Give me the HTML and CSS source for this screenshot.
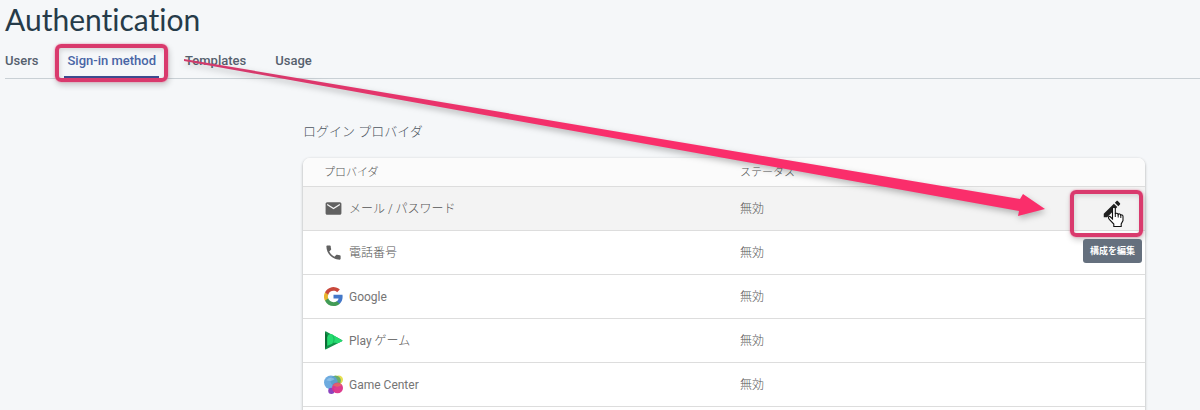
FILE: index.html
```html
<!DOCTYPE html>
<html lang="ja">
<head>
<meta charset="utf-8">
<meta name="viewport" content="width=device-width, initial-scale=1">
<title>Authentication</title>
<link rel="stylesheet" href="styles.css">
</head>
<body>
<div class="page">
  <header class="header">
    <h1 class="title">Authentication</h1>
    <nav class="tabs">
      <a class="tab" href="#users">Users</a>
      <a class="tab tab-active" href="#sign-in" aria-current="page">Sign-in method<span class="marker marker-tab"></span></a>
      <a class="tab" href="#templates">Templates</a>
      <a class="tab" href="#usage">Usage</a>
    </nav>
  </header>
  <main class="content">
    <h2 class="section-title" id="providers">ログイン プロバイダ</h2>
    <div class="card">
      <table class="providers" aria-labelledby="providers">
        <thead>
          <tr><th class="col-name" scope="col">プロバイダ</th><th scope="col">ステータス</th><th class="col-action"></th></tr>
        </thead>
        <tbody>
          <tr class="row-hover">
            <td><div class="provider"><svg class="icon" viewBox="0 0 24 24" fill="#616161"><path d="M20 4H4c-1.100 0-1.990.9-1.990 2L2 18c0 1.100.9 2 2 2h16c1.100 0 2-.9 2-2V6c0-1.100-.9-2-2-2zm0 4l-8 5-8-5V6l8 5 8-5v2z"/></svg><span>メール / パスワード</span></div></td>
            <td>無効</td>
            <td class="action">
              <button class="edit" type="button" aria-label="構成を編集">
                <svg class="pencil" viewBox="0 0 24 24" fill="#202020"><path d="M3 17.250V21h3.750L17.810 9.940l-3.750-3.750L3 17.250zM20.710 7.040c.39-.39.39-1.020 0-1.410l-2.340-2.340c-.39-.39-1.020-.39-1.410 0l-1.830 1.830 3.750 3.750 1.830-1.830z"/></svg>
                <svg class="pointer" viewBox="0 0 17 22"><path d="M5.500 13V2.500C5.500.8 8.300.8 8.300 2.500V8c.3-1 2.700-1 2.900.4.500-.9 2.400-.6 2.600.7.600-.6 2.200-.2 2.200 1.300v4.200l-1.800 3.400v2.500H6.800V18L2.300 13.300C.8 11.700 1.500 9.900 3 10.500L5.500 13z" fill="#fff" stroke="#111" stroke-width="1.100"/><path d="M8.300 7.500v3.500M11.200 8v3.500M13.800 9v3" stroke="#111" fill="none"/></svg>
              </button>
              <span class="marker marker-edit"></span>
              <span class="tooltip" role="tooltip">構成を編集</span>
            </td>
          </tr>
          <tr>
            <td><div class="provider"><svg class="icon" viewBox="0 0 24 24" fill="#616161"><path d="M6.620 10.790c1.440 2.830 3.760 5.140 6.590 6.590l2.200-2.200c.27-.27.67-.36 1.020-.24 1.120.37 2.330.57 3.570.57.55 0 1 .45 1 1V20c0 .55-.45 1-1 1-9.390 0-17-7.610-17-17 0-.55.45-1 1-1h3.500c.55 0 1 .45 1 1 0 1.250.2 2.450.57 3.570.11.35.03.74-.25 1.020l-2.200 2.200z"/></svg><span>電話番号</span></div></td>
            <td>無効</td><td></td>
          </tr>
          <tr>
            <td><div class="provider"><svg class="icon" viewBox="0 0 18 18"><path fill="#4478c8" d="M17.640 9.200c0-.64-.06-1.250-.16-1.840H9v3.480h4.840a4.140 4.140 0 0 1-1.800 2.720v2.260h2.920c1.700-1.570 2.680-3.880 2.680-6.620z"/><path fill="#429b56" d="M9 18c2.430 0 4.470-.8 5.960-2.180l-2.920-2.260c-.8.54-1.840.86-3.040.86-2.340 0-4.330-1.580-5.040-3.710H.96v2.330A9 9 0 0 0 9 18z"/><path fill="#e8b52d" d="M3.960 10.710a5.400 5.400 0 0 1 0-3.420V4.960H.96a9 9 0 0 0 0 8.080l3-2.330z"/><path fill="#c9483c" d="M9 3.580c1.320 0 2.510.45 3.440 1.350l2.580-2.590A9 9 0 0 0 .96 4.960l3 2.330C4.670 5.160 6.660 3.580 9 3.580z"/></svg><span class="latin">Google</span></div></td>
            <td>無効</td><td></td>
          </tr>
          <tr>
            <td><div class="provider"><svg class="icon" viewBox="0 0 18 18"><path d="M1 1v16c0 .5.500.7 1 .4L17 9.700c.7-.4.7-.8 0-1.200L2 .4C1.500.1 1 .4 1 1z" fill="#12934a"/><path d="M1 1l2.500 4v8L1 17z" fill="#0d6b35"/><path d="M3 6c1-3 4-4 6-2l8 4.700c.4.300.3.700 0 .9L13 11.500c-3 0-4-1-5 .5L3 14z" fill="#25dc70"/><path d="M8 4.500c2 1 2 5 0 7.500" fill="none" stroke="#12a851" stroke-width=".7"/></svg><span><span class="latin">Play</span> ゲーム</span></div></td>
            <td>無効</td><td></td>
          </tr>
          <tr>
            <td><div class="provider"><svg class="icon" viewBox="0 0 18 18"><circle cx="14" cy="4.500" r="4" fill="#e6df4f"/><circle cx="11" cy="5.500" r="5" fill="#6cae64"/><circle cx="6.500" cy="7" r="6.500" fill="#5a9fdb" fill-opacity=".88"/><circle cx="7" cy="15" r="3" fill="#8b44be"/><circle cx="12.800" cy="12.200" r="5.200" fill="#dc3288" fill-opacity=".95"/><path d="M8.500 10c2-3 6-3 8.500-.5-3 2-6 2-8.500.5z" fill="#e78052" fill-opacity=".6"/><path d="M2 5c3-3 6-3 8-1-3 2-5 2-8 1z" fill="#a9d6f2" fill-opacity=".5"/></svg><span class="latin">Game Center</span></div></td>
            <td>無効</td><td></td>
          </tr>
          <tr><td></td><td></td><td></td></tr>
        </tbody>
      </table>
    </div>
  </main>
  <svg class="arrow" viewBox="0 0 1200 410" aria-hidden="true">
    <defs><linearGradient id="stroke-tone"><stop offset="0" stop-color="#cf3b6c"/><stop offset=".25" stop-color="#e6346b"/><stop offset=".5" stop-color="#fa2e6b"/></linearGradient></defs>
    <path d="M184 59L1020 199L1023 194L1045 209L1018 216L1019 211L184 61z" fill="url(#stroke-tone)"/>
  </svg>
</div>
</body>
</html>
```
FILE: styles.css
```css
* { box-sizing: border-box; }

body {
  margin: 0;
  background: #f5f7f9;
  color: #555;
  font-family: Roboto, "Noto Sans CJK JP", sans-serif;
  font-size: 12px;
}

.page {
  position: relative;
  height: 100vh;
  overflow: hidden;
}

.header { padding-left: 5px; }

.title {
  margin: 0;
  color: #263b49;
  font-family: Lato, sans-serif;
  font-size: 30px;
  font-variant-ligatures: none;
  font-weight: 400;
  line-height: 38px;
}

.tabs {
  display: flex;
  gap: 23px;
  padding-top: 6px;
  box-shadow: inset 0 -1px #c9d0d5;
}

.tab {
  position: relative;
  height: 35px;
  padding: 0 3px;
  border-bottom: 3px solid transparent;
  color: #56616e;
  font-size: 13px;
  font-weight: 500;
  line-height: 34px;
  text-decoration: none;
}

.tab:first-child { padding-left: 0; }

.tab-active {
  border-color: #3e4d91;
  color: #4865a5;
}

.marker {
  position: absolute;
  border: 4px solid #d93a6d;
  border-radius: 6px;
  box-shadow: 0 0 2px #ef7da0, 1px 3px 6px #0003, inset 1px 2px 5px #0002;
  pointer-events: none;
}

.marker-tab { inset: 0 -9px -6px; }

.content { padding: 43px 55px 0 303px; }

.section-title {
  margin: 0;
  color: #4d5560;
  font-size: 13px;
  font-weight: 300;
  line-height: 20px;
}

.card {
  margin-top: 16px;
  border-radius: 7px;
  background: #fff;
  box-shadow: 0 1px 3px #0005;
}

.providers {
  width: 100%;
  border-collapse: separate;
  border-spacing: 0;
  table-layout: fixed;
}

.providers th {
  height: 29px;
  padding: 2px 16px 0;
  border-bottom: 1px solid #ddd;
  background: #fbfbfb;
  font-size: 11px;
  font-weight: 300;
  line-height: 20px;
  text-align: left;
}

.providers th:first-child { border-top-left-radius: 7px; }
.providers th:last-child { border-top-right-radius: 7px; }
.providers .col-name { width: 50%; padding-left: 21px; }
.col-action { width: 76px; }

.providers td {
  height: 44px;
  padding: 0 16px;
  border-bottom: 1px solid #ddd;
  font-weight: 300;
  line-height: 20px;
}

.providers td:first-child { padding-left: 21px; }
.row-hover { background: #f3f3f3; }

.provider {
  display: flex;
  align-items: center;
  gap: 6px;
}

.latin {
  color: #757575;
  font-weight: 400;
}

.icon {
  width: 19px;
  height: 19px;
}

.providers .action {
  position: relative;
  padding: 0;
}

.edit {
  position: relative;
  display: block;
  width: 24px;
  height: 24px;
  margin-left: 32px;
  padding: 0;
  border: 0;
  background: transparent;
}

.pencil {
  display: block;
  width: 22px;
  height: 22px;
}

.pointer {
  position: absolute;
  top: 9px;
  left: 6px;
  width: 17px;
  height: 22px;
}

.marker-edit { inset: 3px 2px -7px 1px; }

.tooltip {
  position: absolute;
  top: 52px;
  right: 3px;
  width: 59px;
  border-radius: 3px;
  background: #65707e;
  color: #fff;
  font-size: 9px;
  font-weight: 700;
  line-height: 24px;
  text-align: center;
}

.arrow {
  position: absolute;
  top: 0;
  left: 0;
  width: 1200px;
  height: 410px;
  filter: drop-shadow(1px 3px 3px #0004);
  pointer-events: none;
}
```
